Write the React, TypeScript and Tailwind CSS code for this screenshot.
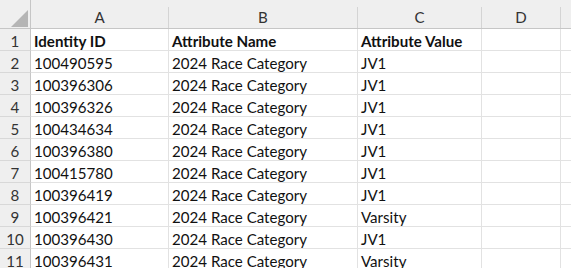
import React from "react";

const rows: [string, string, string, string][] = [
  ["1", "Identity ID", "Attribute Name", "Attribute Value"],
  ["2", "100490595", "2024 Race Category", "JV1"],
  ["3", "100396306", "2024 Race Category", "JV1"],
  ["4", "100396326", "2024 Race Category", "JV1"],
  ["5", "100434634", "2024 Race Category", "JV1"],
  ["6", "100396380", "2024 Race Category", "JV1"],
  ["7", "100415780", "2024 Race Category", "JV1"],
  ["8", "100396419", "2024 Race Category", "JV1"],
  ["9", "100396421", "2024 Race Category", "Varsity"],
  ["10", "100396430", "2024 Race Category", "JV1"],
  ["11", "100396431", "2024 Race Category", "Varsity"],
];

const font = { fontFamily: "Lato, 'Open Sans', sans-serif" };

export default function App() {
  return (
    <div className="w-[571px] h-[268px] overflow-hidden bg-white text-[15.1px] text-[#111]" style={font}>
      {/* column header */}
      <div className="flex h-[29px] bg-[#efefef] border-b border-[#c6c6c6]">
        <div className="relative w-[31px] shrink-0 border-r border-[#c6c6c6]">
          <svg className="absolute left-[11px] top-[10px]" width="17" height="17" viewBox="0 0 17 17">
            <polygon points="0,17 17,17 17,0" fill="#b5b5b5" />
          </svg>
        </div>
        {[
          ["A", "w-[138px]"],
          ["B", "w-[189px]"],
          ["C", "w-[124px]"],
          ["D", "w-[79px]"],
        ].map(([l, w]) => (
          <div key={l} className={`${w} shrink-0 flex items-end`}>
            <div className="flex-1 h-[21px] border-r border-[#d4d4d4] flex items-center justify-center text-[#333] pb-[1px]">
              {l}
            </div>
          </div>
        ))}
        <div className="flex-1 flex items-end">
          <div className="flex-1 h-[21px]" />
        </div>
      </div>
      {rows.map((r, i) => (
        <div key={i} className="flex h-[22px]">
          <div className="w-[31px] shrink-0 bg-[#efefef] border-r border-[#c6c6c6] border-b border-b-[#d8d8d8] flex items-center justify-center text-[#333] pt-[3px]">
            {r[0]}
          </div>
          <div className={`w-[138px] shrink-0 border-r border-b border-[#e2e2e2] pl-[3px] pt-[3px] flex items-center ${i === 0 ? "font-bold" : ""}`}>
            {r[1]}
          </div>
          <div className={`w-[189px] shrink-0 border-r border-b border-[#e2e2e2] pl-[3px] pt-[3px] flex items-center ${i === 0 ? "font-bold" : ""}`}>
            {r[2]}
          </div>
          <div className={`w-[124px] shrink-0 border-r border-b border-[#e2e2e2] pl-[3px] pt-[3px] flex items-center ${i === 0 ? "font-bold" : ""}`}>
            {r[3]}
          </div>
          <div className="w-[79px] shrink-0 border-r border-b border-[#e2e2e2]" />
          <div className="flex-1 border-b border-[#e2e2e2]" />
        </div>
      ))}
    </div>
  );
}
